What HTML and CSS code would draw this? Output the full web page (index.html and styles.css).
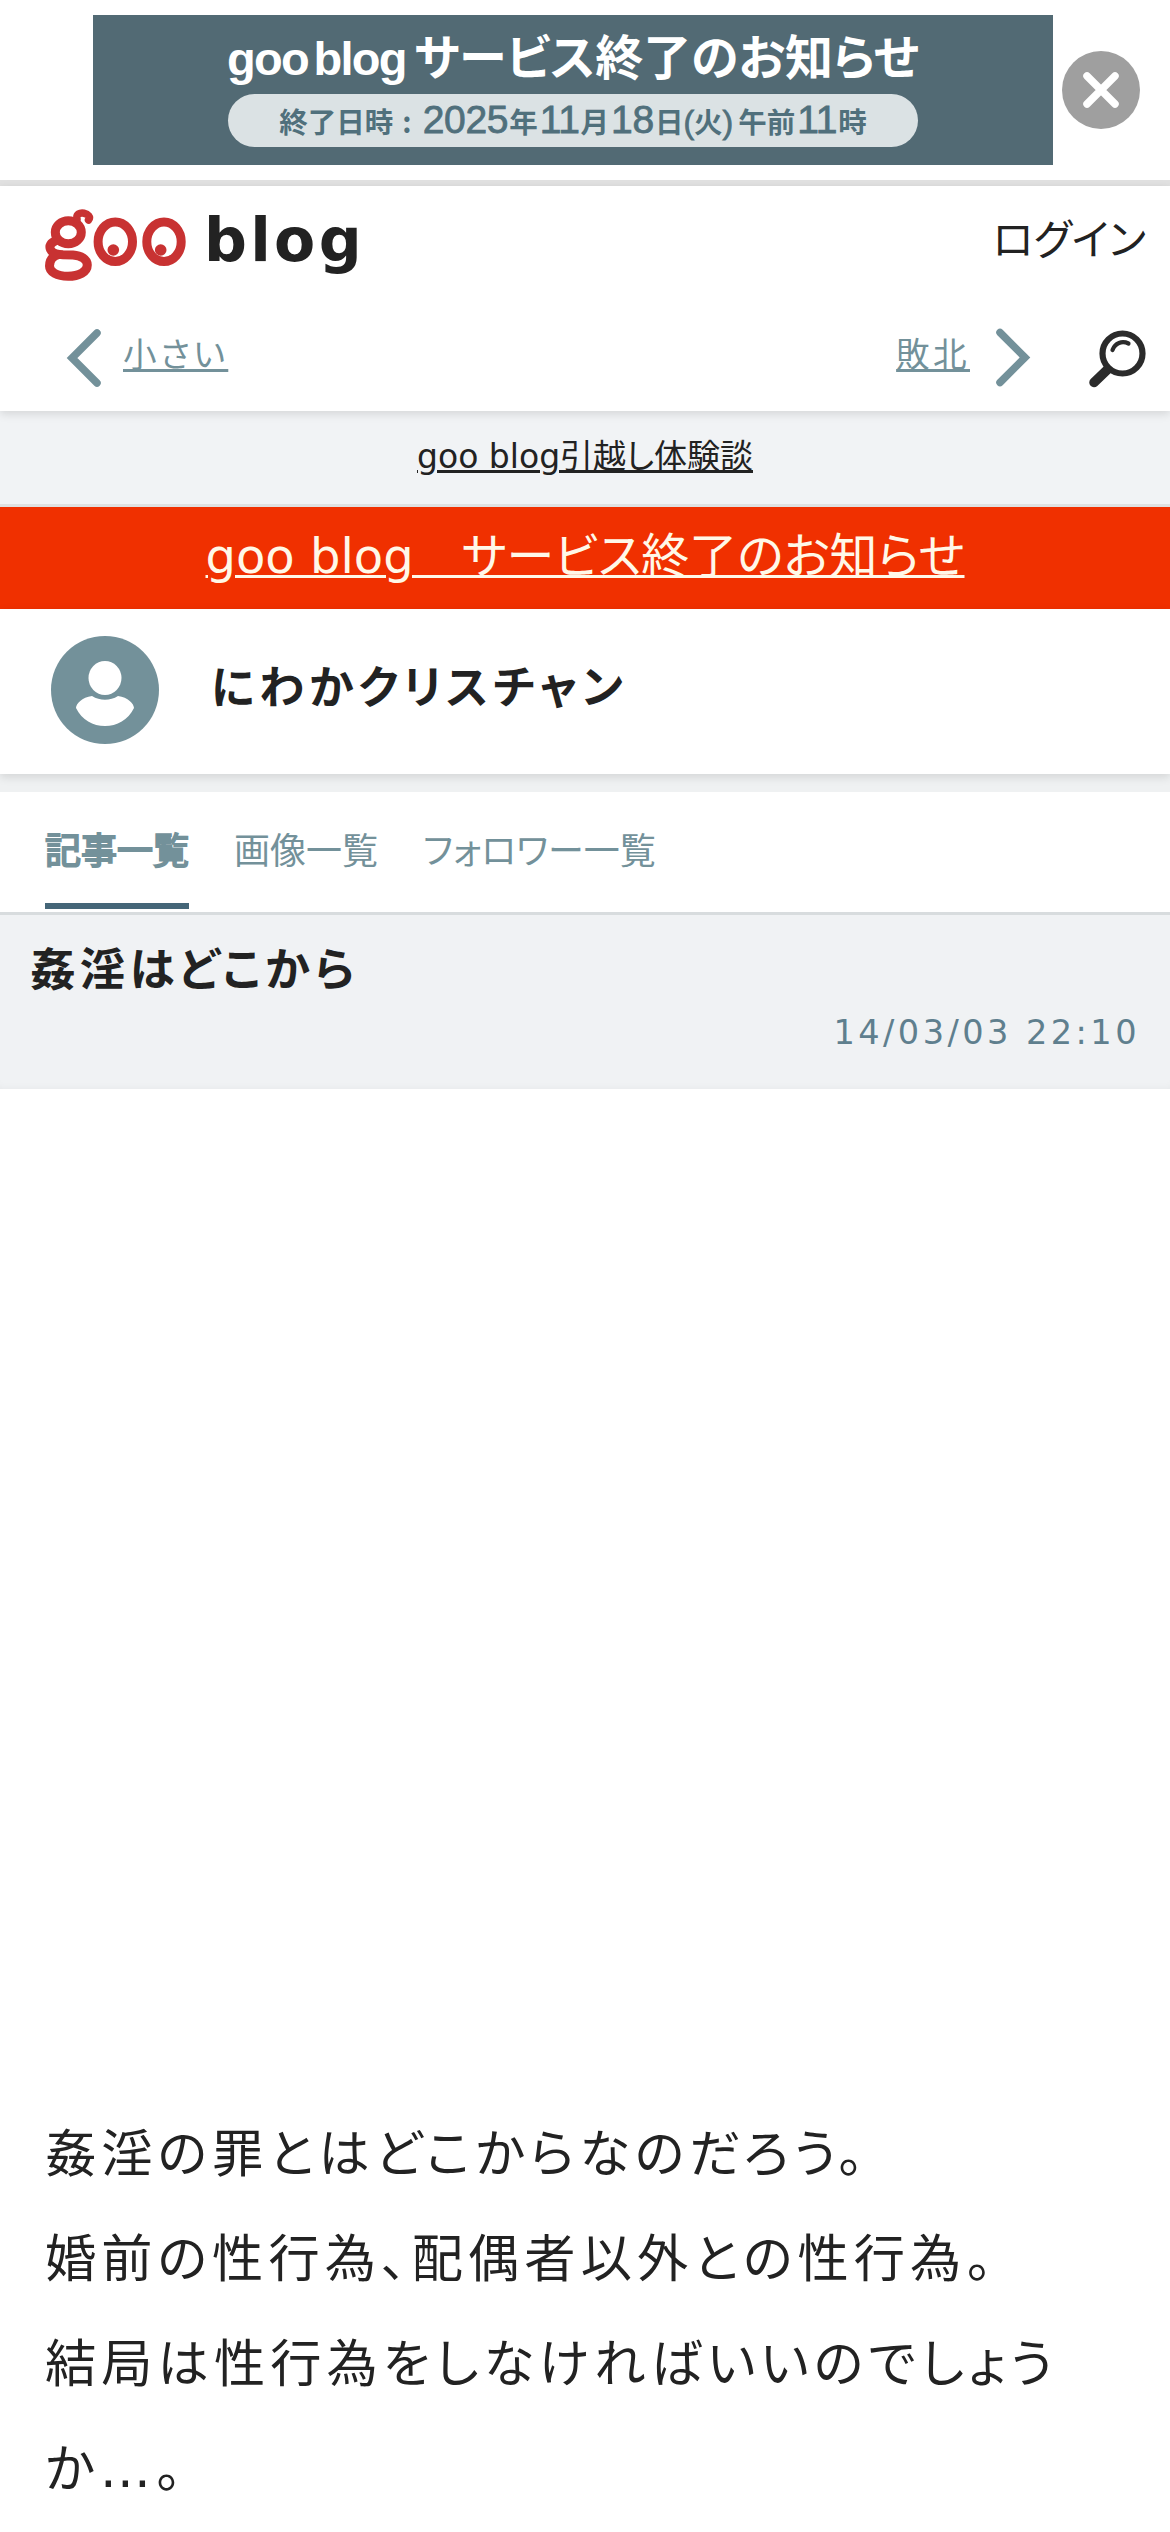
FILE: index.html
```html
<!DOCTYPE html>
<html lang="ja">
<head>
<meta charset="utf-8">
<title>姦淫はどこから</title>
<link rel="stylesheet" href="styles.css">
</head>
<body>
<aside class="notice">
  <a class="notice-banner">
    <span class="notice-title"><span class="nt-goo">goo</span><span class="nt-blog">blog</span><span class="nt-ja">サービス終了のお知らせ</span></span>
    <span class="notice-date"><span class="d-label">終了日時</span><span class="d-colon">:</span><b>2025</b>年<b>11</b>月<b>18</b>日<span class="paren">(</span>火<span class="paren">)</span><span class="d-noon">午前</span><b>11</b>時</span>
  </a>
  <button class="close" aria-label="閉じる">
    <svg viewBox="0 0 78 78" width="78" height="78"><circle cx="39" cy="39" r="39" fill="#9f9f9f"/><path d="M25 25L53 53M53 25L25 53" stroke="#fff" stroke-width="7.5" stroke-linecap="round"/></svg>
  </button>
</aside>
<header class="header">
  <div class="brand-row">
    <a class="brand">
      <svg class="goo" viewBox="0 0 142 74" width="142" height="74" fill="none" stroke="#c83232">
        <ellipse cx="23.300" cy="23.300" rx="13" ry="11.500" stroke-width="9"/>
        <path d="M32 10C31 5 35 3.500 39 4.200C43 5 46 8 43.500 11" stroke-width="7.500" stroke-linecap="round"/>
        <path d="M12 31C5 34 4 37 5.500 40.500C7 44 12 45.500 18 45.800L28 46C36 46.500 42.300 50 42.300 56C42.300 63 34 67.300 23 67.300C12 67.300 4.500 63 4.500 57C4.500 51 8 47 14 45.500" stroke-width="9"/>
        <ellipse cx="70.300" cy="32.700" rx="17.200" ry="19.800" stroke-width="9"/>
        <ellipse cx="119" cy="32.700" rx="17.200" ry="19.800" stroke-width="9"/>
        <circle cx="68.300" cy="41" r="5.800" fill="#c83232" stroke="none"/>
        <circle cx="115.700" cy="41" r="5.800" fill="#c83232" stroke="none"/>
      </svg>
      <span class="blog">blog</span>
    </a>
    <a class="login">ログイン</a>
  </div>
  <nav class="pager">
    <a class="prev"><svg viewBox="0 0 36 60" width="36" height="60"><path d="M32 5L7 30L32 55" fill="none" stroke="#73919a" stroke-width="7.500" stroke-linecap="round"/></svg><span class="link">小さい</span></a>
    <a class="next"><span class="link">敗北</span><svg viewBox="0 0 36 60" width="36" height="60"><path d="M5 4.500L30 29.500L5 54.500" fill="none" stroke="#73919a" stroke-width="7.500" stroke-linecap="round"/></svg></a>
    <svg class="search" viewBox="0 0 58 58" width="58" height="58" fill="none" stroke="#2b2b2b" stroke-linecap="round"><circle cx="34.500" cy="23.500" r="20" stroke-width="6.200"/><path d="M19 40L6 52.500" stroke-width="9.500"/><path d="M24.500 20C27 13 34 10.500 40.500 13.500" stroke-width="4.200"/></svg>
  </nav>
</header>
<p class="experience"><a>goo blog引越し体験談</a></p>
<p class="alert"><a>goo blog　サービス終了のお知らせ</a></p>
<section class="profile">
  <svg viewBox="0 0 108 108" width="108" height="108"><circle cx="54" cy="54" r="54" fill="#73919a"/><ellipse cx="54" cy="42" rx="16.500" ry="17" fill="#fff"/><path d="M41 60C31 61 25 68 25 72C31 84 42 90 54 90C66 90 77 84 83 72C83 68 77 61 67 60C59 65 49 65 41 60Z" fill="#fff"/></svg>
  <h1 class="name">にわかクリスチャン</h1>
</section>
<nav class="tabs"><a class="tab active">記事一覧</a><a class="tab">画像一覧</a><a class="tab">フォロワー一覧</a></nav>
<main>
  <header class="entry-head">
    <h2 class="entry-title">姦淫はどこから</h2>
    <time class="entry-date">14/03/03 22:10</time>
  </header>
  <div class="ad-space"></div>
  <article class="entry-body">
    <p>姦淫の罪とはどこからなのだろう。</p>
    <p>婚前の性行為、配偶者以外との性行為。</p>
    <p>結局は性行為をしなければいいのでしょうか…。</p>
  </article>
</main>
</body>
</html>
```
FILE: styles.css
```css
* { box-sizing: border-box; margin: 0; padding: 0; }
body {
  width: 1170px;
  height: 2532px;
  overflow: hidden;
  background: #fff;
  color: #222;
  font-family: "DejaVu Sans", "Noto Sans CJK JP", sans-serif;
  font-feature-settings: "palt";
}
.notice {
  display: flex;
  height: 186px;
  padding: 15px 0 0 93px;
  border-bottom: 6px solid #e1e1e1;
}
.notice-banner {
  display: flex;
  flex-direction: column;
  align-items: center;
  width: 960px;
  height: 150px;
  background: #526a74;
  font-family: "Noto Sans CJK JP", sans-serif;
}
.notice-title {
  display: flex;
  align-items: baseline;
  width: 692px;
  height: 79px;
  line-height: 78px;
  color: #fff;
  font-size: 48px;
  font-weight: 700;
  white-space: nowrap;
}
.nt-goo, .nt-blog { font-family: "Liberation Sans", sans-serif; font-size: 47px; letter-spacing: -1.700px; }
.nt-goo { width: 87px; }
.nt-blog { width: 101px; }
.notice-date {
  width: 690px;
  height: 53px;
  border-radius: 27px;
  background: #dbe2e4;
  color: #50707c;
  font-size: 28.500px;
  font-weight: 700;
  line-height: 53px;
  text-align: center;
  white-space: nowrap;
}
.notice-date b, .paren {
  font-family: "Liberation Sans", sans-serif;
  font-size: 39px;
  font-weight: 400;
  line-height: 1;
  -webkit-text-stroke: .8px #50707c;
}
.notice-date .paren { font-size: 32px; }
.notice-date b { padding: 0 1px 0 2px; letter-spacing: -.3px; }
.d-colon { padding: 0 9px; }
.d-noon { padding-left: 5px; }
.close { width: 78px; height: 78px; margin: 36px 0 0 9px; border: 0; background: none; }
.close svg { display: block; }
.header { position: relative; height: 225px; background: #fff; box-shadow: 0 3px 9px rgba(0,0,0,.12); }
.brand-row { display: flex; justify-content: space-between; height: 120px; padding: 23px 24px 0 45px; }
.brand { display: flex; gap: 17px; }
.blog { font-size: 60px; font-weight: 700; line-height: 62px; letter-spacing: 3.300px; }
.login { font-size: 42px; line-height: 63px; }
.pager { display: flex; padding: 22px 24px 0 65px; color: #73919a; font-size: 33.600px; letter-spacing: 3.360px; }
.prev, .next { display: flex; }
.prev { gap: 22px; }
.next { margin-left: auto; gap: 25px; }
.link { line-height: 55px; text-decoration: underline; text-decoration-thickness: 3px; }
.search { margin: 2px 0 0 57px; }
.experience { height: 96px; padding-top: 20px; border-bottom: 3px solid #dfe1e1; background: #f1f3f5; text-align: center; font-size: 33px; line-height: 52px; }
.experience a, .alert a { text-decoration: underline; text-decoration-thickness: 3px; }
.alert { height: 102px; background: #f03000; color: #fff8e8; text-align: center; font-size: 48px; line-height: 98px; }
.profile { position: relative; z-index: 0; display: flex; gap: 52px; height: 165px; padding: 27px 51px 0; background: #fff; box-shadow: 0 3px 9px rgba(0,0,0,.12); }
.name { font-size: 45px; line-height: 106px; letter-spacing: 4.500px; }
.tabs { display: flex; gap: 45px; height: 141px; padding-left: 45px; border-top: 18px solid #eff1f2; border-bottom: 3px solid #d8dcde; color: #73919a; font-size: 36px; }
.tab { height: 117px; line-height: 119px; }
.active { border-bottom: 6px solid #456678; -webkit-text-stroke: 1.900px #73919a; }
.entry-head { height: 174px; padding: 20px 30px 0; background: #f0f2f4; box-shadow: inset 0 -6px 8px -6px rgba(0,0,0,.05); }
.entry-title { font-size: 45.300px; line-height: 72px; letter-spacing: 4.530px; }
.entry-date { display: block; padding-top: 1px; text-align: right; color: #5f7f8e; font-size: 33.600px; line-height: 50px; letter-spacing: 3.450px; }
.ad-space { height: 1013px; }
.entry-body { padding: 0 45px; font-size: 51.200px; line-height: 105px; letter-spacing: 5.120px; }
```
